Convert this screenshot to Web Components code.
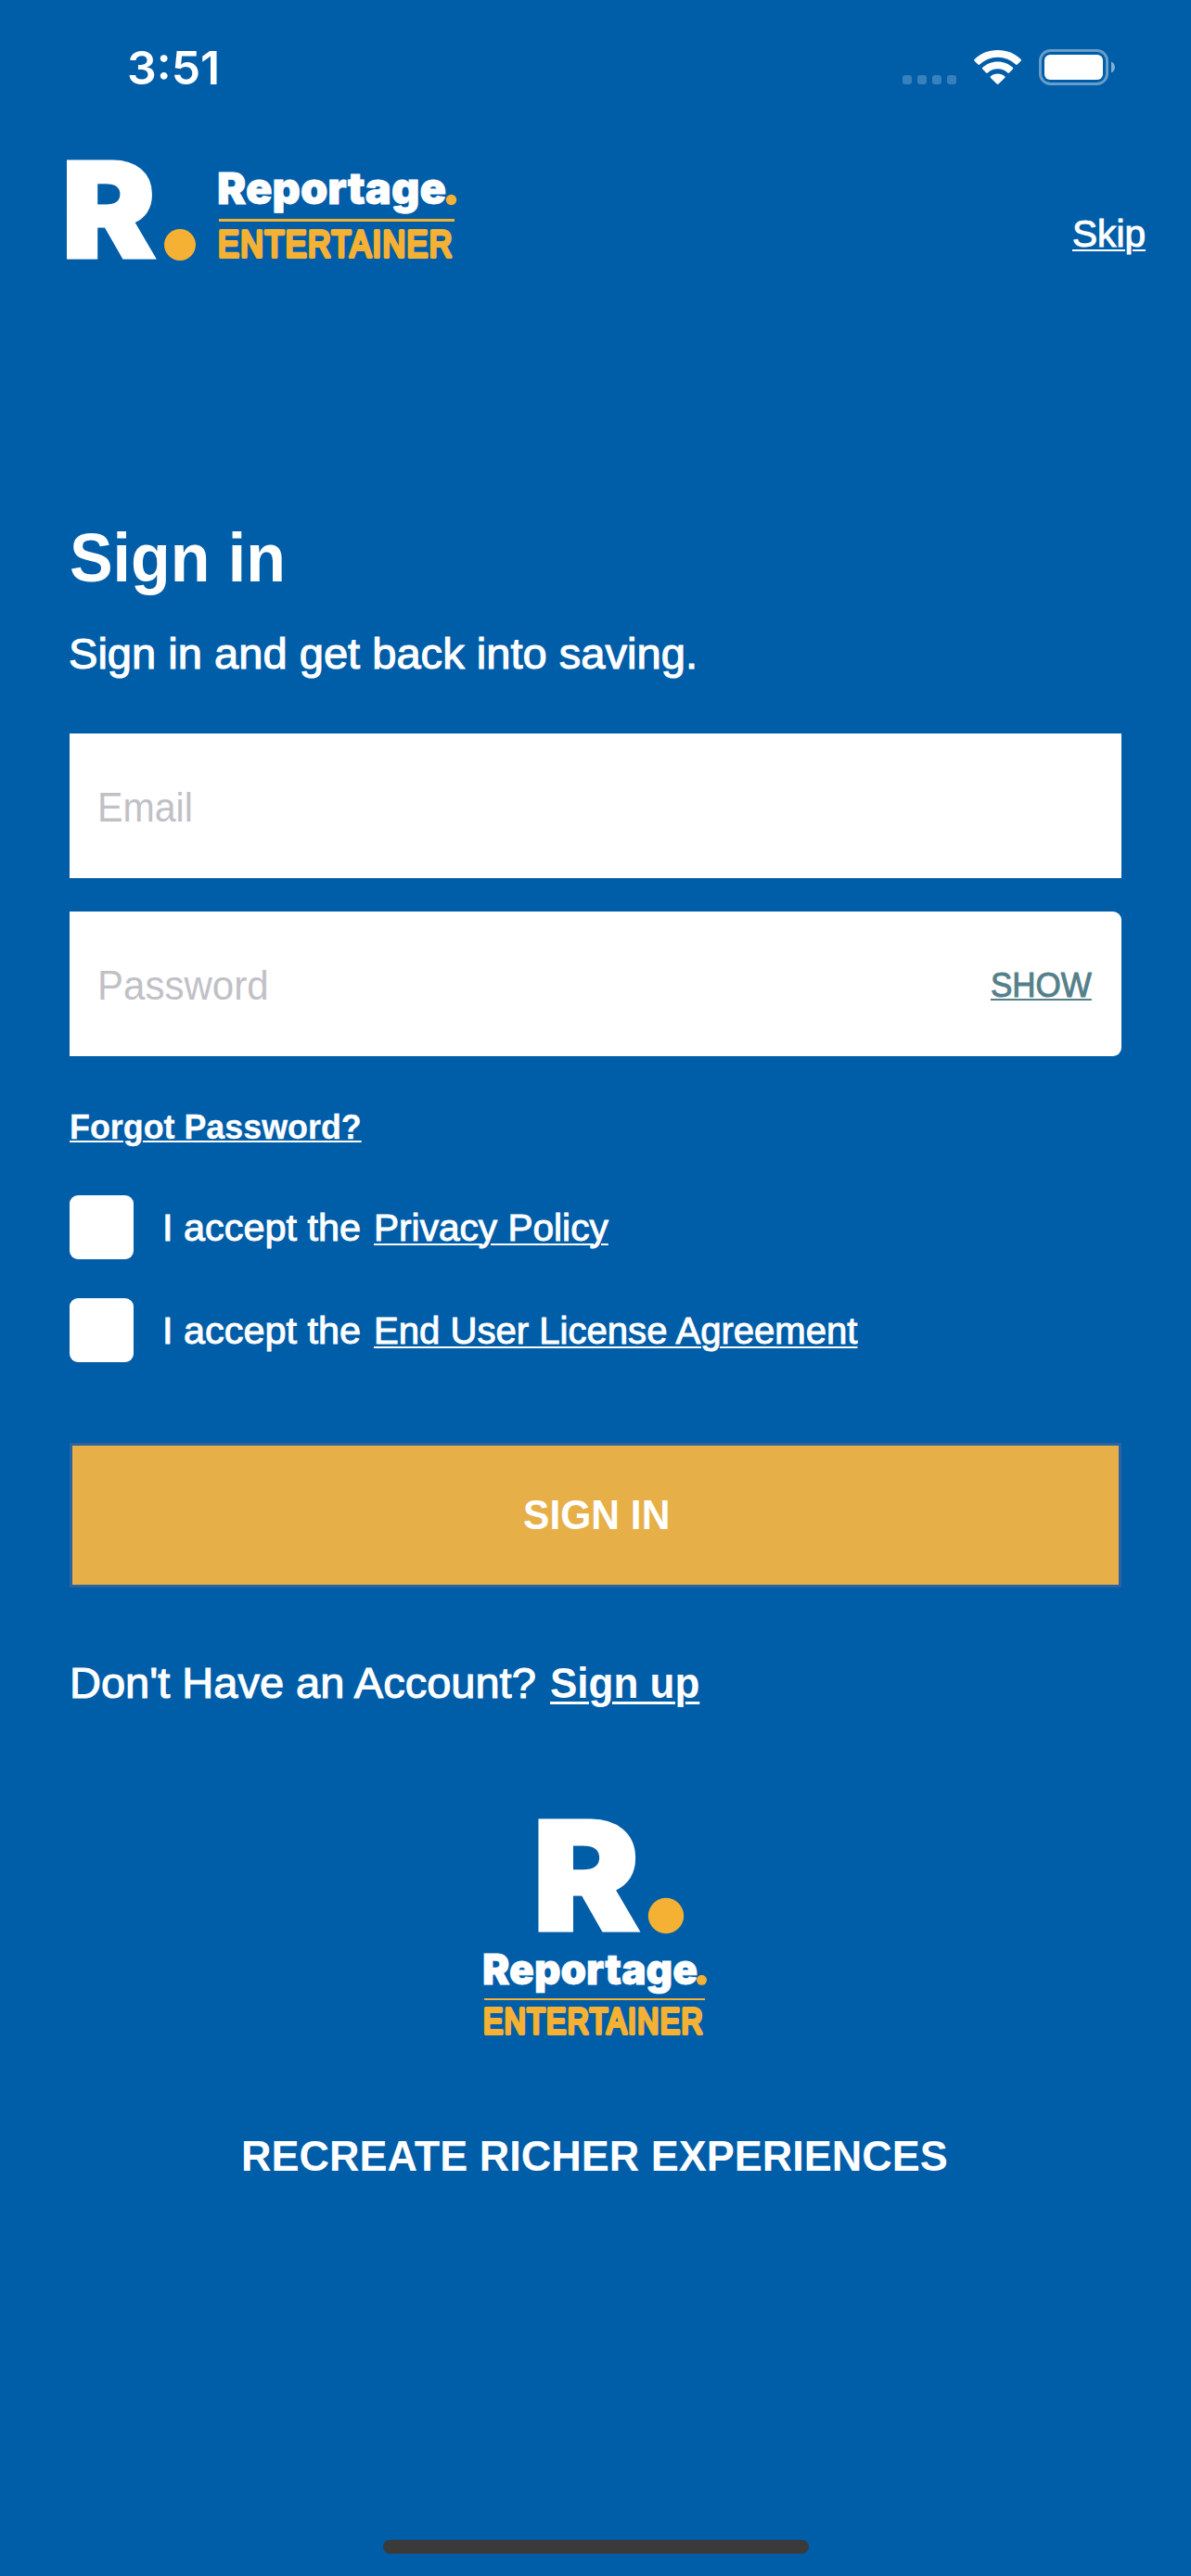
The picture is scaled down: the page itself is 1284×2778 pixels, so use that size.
<!DOCTYPE html>
<html lang="en">
<head>
<meta charset="utf-8">
<title>Sign in</title>
<style>
html,body{margin:0;background:#005da8}
body{width:1284px;height:2778px;overflow:hidden;font-family:"Liberation Sans",Arial,sans-serif;color:#fff}
</style>
</head>
<body>
<sign-in-screen></sign-in-screen>
<script>
const shadow = (el, html) => { const r = el.attachShadow({mode:'open'}); r.innerHTML = html; return r; };
const pen = document.createElement('canvas').getContext('2d');

// A line of text whose visible width is set by its "ink" attribute.
customElements.define('fit-text', class extends HTMLElement {
  connectedCallback() {
    const a = (n, d) => this.getAttribute(n) ?? d;
    const size = a('size'), ink = +a('ink'), h = a('h', '60'), weight = a('weight', '400');
    const family = a('family', 'Liberation Sans');
    pen.font = `${weight} ${size}px "${family}"`;
    const m = pen.measureText(this.textContent);
    const k = ink / (m.actualBoundingBoxLeft + m.actualBoundingBoxRight);
    shadow(this, `<style>
      :host{display:block;flex:none;width:${ink}px;height:${h}px;white-space:pre}
      span{display:inline-block;font:${weight} ${size}px/${h}px "${family}",sans-serif;
        transform:scaleX(${k});transform-origin:0 0;
        margin-left:${m.actualBoundingBoxLeft * k}px;-webkit-text-stroke:${a('stroke','0')}px currentColor;
        ${this.hasAttribute('line') ? `text-decoration:underline;text-decoration-thickness:${a('thick','2')}px;text-underline-offset:${a('line')}px` : ''}}
    </style><span><slot></slot></span>`);
  }
});

customElements.define('status-bar', class extends HTMLElement {
  connectedCallback() {
    shadow(this, `<style>
      :host{display:flex;height:146px;align-items:center;justify-content:space-between;padding:0 80px 0 139px}
      svg{display:block;margin-top:-1px}
    </style>
    <fit-text size="50" ink="95" h="146" weight="600" family="Inter">3:51</fit-text>
    <svg width="234" height="45" viewBox="970 50 234 45" fill="#fff">
      <g opacity=".22"><rect x="973" y="81" width="10" height="10" rx="3"/><rect x="989" y="81" width="10" height="10" rx="3"/><rect x="1005" y="81" width="10" height="10" rx="3"/><rect x="1021" y="81" width="10" height="10" rx="3"/></g>
      <path d="M1075.6 54c9.8 0 18.700 3.700 25 9.900.6.6.6 1.200 0 1.800l-3.800 3.800c-.5.500-1.200.500-1.800 0a28 28 0 0 0-38.800 0c-.6.500-1.300.500-1.800 0l-3.800-3.800c-.6-.6-.6-1.200 0-1.800 6.300-6.200 15.200-9.900 25-9.900z"/>
      <path d="M1075.600 66.500c6.300 0 12 2.400 16.300 6.300.6.600.6 1.200 0 1.800l-3.800 3.800c-.5.500-1.200.500-1.800 0a15.700 15.700 0 0 0-21.400 0c-.6.500-1.300.500-1.800 0l-3.800-3.800c-.6-.6-.6-1.200 0-1.800 4.300-3.900 10-6.300 16.300-6.300z"/>
      <path d="M1075.600 79.500c2.900 0 5.600 1 7.600 2.700.6.600.6 1.100 0 1.700l-6.700 6.700c-.6.600-1.200.6-1.800 0l-6.700-6.700c-.6-.6-.6-1.100 0-1.700 2-1.700 4.700-2.700 7.600-2.700z"/>
      <rect x="1121.500" y="54.500" width="72" height="36" rx="11" fill="none" stroke="#fff" stroke-width="3" opacity=".4"/>
      <rect x="1126" y="59" width="63" height="27" rx="6"/>
      <path d="M1198 66.500c5.300 2.300 5.300 9.700 0 12z" opacity=".5"/>
    </svg>`);
  }
});

const LOGO = {
  wide: `<svg width="430" height="118" viewBox="70 168 430 118">
    <text class="r" x="66.500" y="277.500" font-size="143" textLength="101.500" lengthAdjust="spacingAndGlyphs" stroke-width="3">R</text><circle cx="194" cy="264" r="17"/>
    <text class="n" x="234" y="219.500" font-size="47" textLength="247" lengthAdjust="spacingAndGlyphs">Reportage</text><circle cx="486.500" cy="215.500" r="5.700"/>
    <rect x="236" y="236" width="254" height="3"/>
    <text class="e" x="235" y="276.500" font-size="41" textLength="254" lengthAdjust="spacingAndGlyphs">ENTERTAINER</text></svg>`,
  stacked: `<svg width="244" height="245" viewBox="520 1955 244 245">
    <text class="r" x="574" y="2082" font-size="164" textLength="116" lengthAdjust="spacingAndGlyphs" stroke-width="3">R</text><circle cx="718" cy="2066" r="19.200"/>
    <text class="n" x="520" y="2139.500" font-size="45" textLength="232" lengthAdjust="spacingAndGlyphs">Reportage</text><circle cx="756.500" cy="2135.300" r="5.500"/>
    <rect x="522" y="2155" width="238" height="2"/>
    <text class="e" x="521" y="2193" font-size="38" textLength="238" lengthAdjust="spacingAndGlyphs">ENTERTAINER</text></svg>`
};
customElements.define('brand-logo', class extends HTMLElement {
  connectedCallback() {
    shadow(this, `<style>
      :host{display:block}svg{display:block;fill:#f4b133;overflow:visible}
      .r,.n{font-family:Inter,sans-serif;font-weight:900;fill:#fff;stroke:#fff}
      .n{stroke-width:.8px}
      .e{font-family:"Liberation Sans",sans-serif;letter-spacing:1.800px;stroke:#f4b133;stroke-width:4.2px;stroke-linejoin:round;stroke-linecap:round}
    </style>${LOGO[this.getAttribute('shape')]}`);
  }
});

customElements.define('text-field', class extends HTMLElement {
  connectedCallback() {
    shadow(this, `<style>
      :host{display:flex;align-items:center;justify-content:space-between;box-sizing:border-box;height:156px;background:#fff;color:#c1c0c7;padding:0 32px 0 33px}
      :host([rounded]){border-radius:0 9px 9px 0}
      ::slotted([slot=action]){color:#55808a;margin-top:1px}
      ::slotted(:not([slot])){margin-top:3px}
    </style><slot></slot><slot name="action"></slot>`);
  }
});

customElements.define('check-row', class extends HTMLElement {
  connectedCallback() {
    shadow(this, `<style>
      :host{display:flex;align-items:center;height:69px}
      i{width:69px;height:69px;border-radius:9px;background:#fff;margin-right:34px}
      .t{margin-right:18.500px}
    </style><i></i><fit-text class="t" size="40.5" ink="209.500" stroke="1">I accept the</fit-text><slot></slot>`);
  }
});

customElements.define('primary-button', class extends HTMLElement {
  connectedCallback() {
    shadow(this, `<style>
      :host{display:flex;align-items:center;justify-content:center;box-sizing:border-box;height:156px;background:#e6af48;border:3px solid #2b64a0}
    </style><slot></slot>`);
  }
});

customElements.define('sign-in-screen', class extends HTMLElement {
  connectedCallback() {
    shadow(this, `<style>
      :host{display:flex;flex-direction:column;height:2778px}
      header{display:flex;justify-content:space-between;height:154px;padding:0 51px 0 70px}
      .logo{margin-top:22px}.skip{margin-top:76px}
      main{display:flex;flex-direction:column;padding:256px 75px 0}
      .in{margin-left:1.500px}
      .account{display:flex;gap:13.500px;margin:73px 0 0 3.500px}
      .center{align-self:center}
      .bar{width:459px;height:15px;border-radius:8px;background:#3a3a3a;margin:auto auto 24px 413px}
    </style>
    <status-bar></status-bar>
    <header><brand-logo class="logo" shape="wide"></brand-logo><fit-text class="skip" size="40.5" ink="76.500" stroke="1" line="3">Skip</fit-text></header>
    <main>
      <fit-text class="in" size="75" h="90" weight="700" ink="227.5">Sign in</fit-text>
      <fit-text class="in" style="margin-top:29px" size="46.5" ink="672" stroke="1.1">Sign in and get back into saving.</fit-text>
      <text-field style="margin-top:56px"><fit-text size="43.6" ink="97.5">Email</fit-text></text-field>
      <text-field style="margin-top:36px" rounded><fit-text size="43.6" ink="179.5">Password</fit-text><fit-text slot="action" size="37.5" ink="108.5" stroke="1" line="2">SHOW</fit-text></text-field>
      <fit-text class="in" style="margin-top:46px" size="37.5" weight="700" ink="311" stroke=".3" line="2">Forgot Password?</fit-text>
      <check-row style="margin-top:44px"><fit-text size="40.5" ink="250.500" stroke="1" line="3">Privacy Policy</fit-text></check-row>
      <check-row style="margin-top:42px"><fit-text size="40.5" ink="520.500" stroke="1" line="3">End User License Agreement</fit-text></check-row>
      <primary-button style="margin-top:87px"><fit-text size="43.6" weight="700" ink="155">SIGN IN</fit-text></primary-button>
      <div class="account"><fit-text size="46.5" ink="501.5" stroke="1.1">Don't Have an Account?</fit-text><fit-text size="46.5" weight="700" ink="159" line="4" thick="3">Sign up</fit-text></div>
      <brand-logo class="center" style="margin-top:110px" shape="stacked"></brand-logo>
      <fit-text class="center" style="margin-top:95px" size="46.5" weight="700" ink="758">RECREATE RICHER EXPERIENCES</fit-text>
    </main>
    <div class="bar"></div>`);
  }
});
</script>
</body>
</html>
